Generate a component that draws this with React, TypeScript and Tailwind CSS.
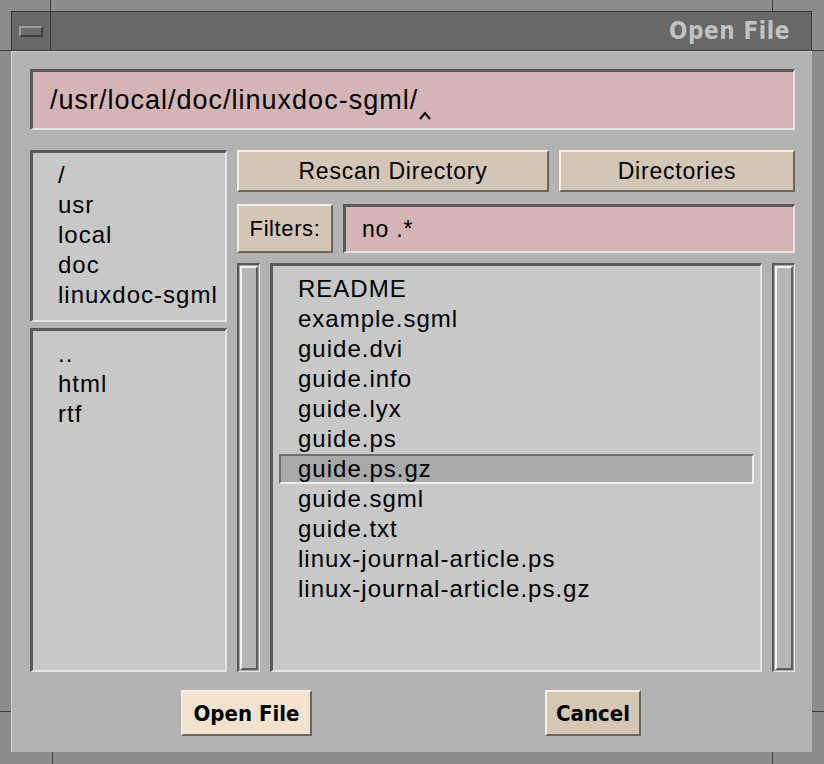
import React from 'react';

// Motif-style "Open File" dialog with window manager frame

const sunken =
  'border-t-[3px] border-l-[3px] border-b-2 border-r-2 border-t-[#5a5a5a] border-l-[#5a5a5a] border-b-[#e4e4e4] border-r-[#e4e4e4]';
const raisedBeige =
  'border-2 border-t-[#f6eee0] border-l-[#f6eee0] border-b-[#6e655a] border-r-[#6e655a]';

const sans = { fontFamily: '"Liberation Sans", Arial, sans-serif' };
const condensed = { fontFamily: '"DejaVu Sans Condensed", "DejaVu Sans", sans-serif' };

const pathParts = ['/', 'usr', 'local', 'doc', 'linuxdoc-sgml'];
const subDirs = ['..', 'html', 'rtf'];
const files = [
  'README',
  'example.sgml',
  'guide.dvi',
  'guide.info',
  'guide.lyx',
  'guide.ps',
  'guide.ps.gz',
  'guide.sgml',
  'guide.txt',
  'linux-journal-article.ps',
  'linux-journal-article.ps.gz',
];
const selectedFile = 'guide.ps.gz';

const ListText: React.FC<{ text: string }> = ({ text }) => (
  <div className="h-[30px] leading-[30px] text-[24px] tracking-[1px] text-black whitespace-nowrap">{text}</div>
);

const ScrollTrack: React.FC = () => (
  <div className="w-[23px] h-full border-t-2 border-l-2 border-b border-r border-t-[#5a5a5a] border-l-[#5a5a5a] border-b-[#e4e4e4] border-r-[#e4e4e4] bg-[#a9a9a9] p-px">
    <div className="h-full border-2 border-t-[#f2f2f2] border-l-[#f2f2f2] border-b-[#5e5e5e] border-r-[#5e5e5e] bg-[#b6b6b6]" />
  </div>
);

// insertion cursor drawn under the end of the path text
const Caret: React.FC = () => (
  <svg width="12" height="10" viewBox="0 0 12 10" className="self-end mb-[8px] ml-[1px]">
    <path d="M1 9 L6 3 L11 9" fill="none" stroke="#000" strokeWidth="2" />
  </svg>
);

export default function App() {
  return (
    <div className="relative w-[824px] h-[764px] bg-[#8c8c8c] pt-[11px] pl-[11px] pr-[12px] pb-[12px] flex flex-col overflow-hidden">
      {/* frame corner marks */}
      <div className="absolute left-[50px] top-0 w-px h-[11px] bg-[#3c3c3c]" />
      <div className="absolute left-[772px] top-0 w-px h-[11px] bg-[#3c3c3c]" />
      <div className="absolute left-0 top-[50px] w-[11px] h-px bg-[#3c3c3c]" />
      <div className="absolute right-0 top-[50px] w-[12px] h-px bg-[#3c3c3c]" />
      <div className="absolute left-[52px] bottom-0 w-px h-[12px] bg-[#3c3c3c]" />
      <div className="absolute left-[772px] bottom-0 w-px h-[12px] bg-[#3c3c3c]" />
      <div className="absolute left-0 bottom-[52px] w-[11px] h-px bg-[#3c3c3c]" />
      <div className="absolute right-0 bottom-[52px] w-[12px] h-px bg-[#3c3c3c]" />

      {/* title bar */}
      <div className="flex h-[41px] border border-[#3a3a3a] bg-[#686868]">
        <div className="w-[39px] h-full border-r border-[#3a3a3a] flex items-center justify-center">
          <div className="w-[24px] h-[11px] border-2 border-t-[#9c9c9c] border-l-[#9c9c9c] border-b-[#3c3c3c] border-r-[#3c3c3c] bg-[#6c6c6c]" />
        </div>
        <div
          className="flex-1 flex items-center justify-end pr-[21px] text-[24px] tracking-[0.6px] font-bold text-[#c2c2c2]"
          style={condensed}
        >
          Open File
        </div>
      </div>

      {/* dialog body */}
      <div
        className="flex-1 flex flex-col bg-[#b3b3b3] border-t border-l border-[#d0d0d0] pt-[17px] pl-[18px] pr-[17px] pb-[16px]"
        style={sans}
      >
        {/* path field */}
        <div className={`h-[61px] ${sunken} bg-[#d4b4b4] flex items-center pl-[17px]`}>
          <span className="text-[27px] tracking-[1px] text-black">/usr/local/doc/linuxdoc-sgml/</span>
          <Caret />
        </div>

        <div className="flex gap-[10px] mt-[20px] h-[522px]">
          {/* directory columns */}
          <div className="w-[197px] flex flex-col gap-[6px]">
            <div className={`h-[172px] ${sunken} bg-[#c8c8c8] pt-[7px] pl-[25px]`}>
              {pathParts.map(p => (
                <ListText key={p} text={p} />
              ))}
            </div>
            <div className={`flex-1 ${sunken} bg-[#c8c8c8] pt-[8px] pl-[25px]`}>
              {subDirs.map(p => (
                <ListText key={p} text={p} />
              ))}
            </div>
          </div>

          {/* controls and file list */}
          <div className="flex-1 flex flex-col">
            <div className="flex gap-[10px] h-[42px]">
              <button
                className={`w-[312px] ${raisedBeige} bg-[#d4c6b6] text-[23px] tracking-[0.8px] text-black`}
              >
                Rescan Directory
              </button>
              <button className={`flex-1 ${raisedBeige} bg-[#d4c6b6] text-[23px] tracking-[0.8px] text-black`}>
                Directories
              </button>
            </div>

            <div className="flex gap-[10px] h-[49px] mt-[12px]">
              <div
                className={`w-[96px] ${raisedBeige} bg-[#d4c6b6] flex items-center justify-center text-[22px] tracking-[0.6px] text-black`}
              >
                Filters:
              </div>
              <div className={`flex-1 ${sunken} bg-[#d4b4b4] flex items-center pl-[16px]`}>
                <span className="text-[23px] tracking-[0.8px] text-black">no .*</span>
              </div>
            </div>

            <div className="flex-1 flex gap-[10px] mt-[10px]">
              <ScrollTrack />
              <div className={`flex-1 ${sunken} bg-[#c8c8c8] pt-[8px] px-[6px]`}>
                {files.map(f =>
                  f === selectedFile ? (
                    <div
                      key={f}
                      className="h-[30px] border-2 border-t-[#6e6e6e] border-l-[#6e6e6e] border-b-[#ececec] border-r-[#ececec] bg-[#a9a9a9] pl-[17px] flex items-center"
                    >
                      <span className="text-[24px] tracking-[1px] text-black">{f}</span>
                    </div>
                  ) : (
                    <div key={f} className="pl-[19px]">
                      <ListText text={f} />
                    </div>
                  )
                )}
              </div>
              <ScrollTrack />
            </div>
          </div>
        </div>

        {/* action buttons */}
        <div className="flex mt-[18px] h-[46px] pl-[151px]">
          <button
            className={`w-[131px] ${raisedBeige} bg-[#f2e2ce] text-[22px] font-bold text-black`}
            style={condensed}
          >
            Open File
          </button>
          <button
            className={`w-[96px] ml-[233px] ${raisedBeige} bg-[#d6c6b4] text-[22px] font-bold text-black`}
            style={condensed}
          >
            Cancel
          </button>
        </div>
      </div>
    </div>
  );
}
